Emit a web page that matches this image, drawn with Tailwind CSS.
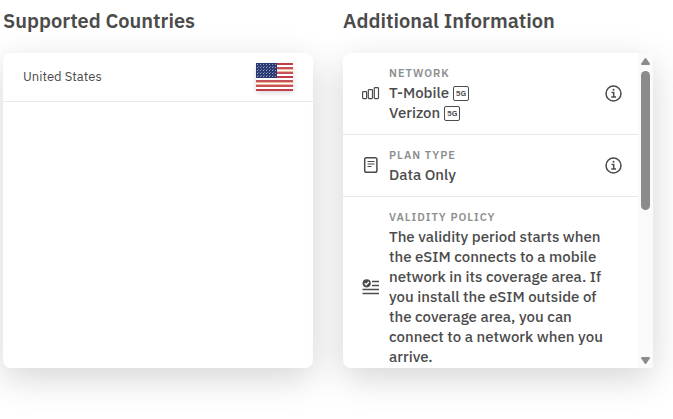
<!DOCTYPE html>
<html lang="en">
<head>
  <meta charset="UTF-8" />
  <meta name="viewport" content="width=device-width, initial-scale=1" />
  <title>eSIM plan details</title>
  <script src="https://cdn.jsdelivr.net/npm/@tailwindcss/browser@4"></script>
</head>
<body class="bg-white pl-[3px] pr-5 pt-2 pb-12 font-['IBM_Plex_Sans',Roboto,sans-serif] text-[#4b4b4b] overflow-x-hidden">

  <main class="grid grid-cols-2 gap-[30px]">

    <!-- Supported countries -->
    <section class="flex flex-col gap-5">
      <h2 class="text-xl leading-[25px] font-semibold whitespace-nowrap">Supported Countries</h2>
      <ul class="h-[315px] rounded-lg bg-white shadow-[0_10px_35px_rgba(0,0,0,0.17)]">
        <li class="flex h-[49px] items-center justify-between border-b border-[#e9e9e9] px-5">
          <span class="text-[13px] leading-5">United States</span>
          <svg class="h-7 w-[37px] shadow-[0_2px_5px_rgba(0,0,0,0.15)]" viewBox="0 0 37 28" role="img" aria-label="United States flag">
            <rect width="37" height="28" fill="#fff" />
            <path fill="#bf3f48" d="M0 0h37v2H0zM0 13h37v2H0zM0 26h37v2H0z" />
            <path fill="#c9525a" d="M0 4h37v2H0zM0 9h37v2H0zM0 17h37v2H0zM0 22h37v2H0z" />
            <path fill="#e9b9a0" d="M0 6h37v1H0zM0 8h37v1H0zM0 19h37v1H0zM0 21h37v1H0z" />
            <rect width="21" height="15" fill="#2b3a72" />
            <g stroke="#9aa2c0" stroke-width="1" stroke-dasharray="1 2">
              <path d="M1 1.500h19M1 4.500h19M1 7.500h19M1 10.500h19M1 13.500h19" />
              <path stroke="#66729e" d="M2 3.500h18M2 6.500h18M2 9.500h18M2 12.500h18" />
            </g>
          </svg>
        </li>
      </ul>
    </section>

    <!-- Additional information -->
    <section class="flex flex-col gap-5">
      <h2 class="text-xl leading-[25px] font-semibold whitespace-nowrap">Additional Information</h2>
      <div class="flex h-[315px] overflow-hidden rounded-l-lg bg-white shadow-[0_10px_35px_rgba(0,0,0,0.17)]">

        <div class="min-w-0 flex-1 overflow-y-auto [scrollbar-width:none]">
          <div class="flex items-center border-b border-[#e9e9e9] pl-[19px] pr-4 pt-2.5 pb-[11px]">
            <svg class="size-[18px] shrink-0" viewBox="0 0 18 18" fill="none" stroke="#4b4b4b" stroke-width="1.200">
              <rect x="0.600" y="7.600" width="4" height="7" rx="0.800" />
              <rect x="6.300" y="5.600" width="4.200" height="9" rx="0.800" />
              <rect x="12.300" y="3.600" width="4.200" height="11" rx="0.800" />
            </svg>
            <div class="ml-[9px] flex-1 text-[15px] leading-5 font-medium">
              <p class="text-[11px] leading-5 font-semibold tracking-[1px] text-[#8c8f8f]">NETWORK</p>
              <p class="flex items-center gap-1">T-Mobile
                <span class="flex h-[15px] w-4 items-center justify-center rounded-xs border border-[#4b4b4b] text-[8px] leading-none font-semibold">5G</span>
              </p>
              <p class="flex items-center gap-1">Verizon
                <span class="flex h-[15px] w-4 items-center justify-center rounded-xs border border-[#4b4b4b] text-[8px] leading-none font-semibold">5G</span>
              </p>
            </div>
            <button type="button" aria-label="Network details" class="shrink-0">
              <svg class="size-[18px]" viewBox="0 0 18 18" fill="none" stroke="#4b4b4b" stroke-width="1.500">
                <circle cx="9.500" cy="9.500" r="7.500" />
                <path d="M7.500 8.500h2.200v4.600M7.200 13.100h4.800" />
                <circle cx="9.500" cy="5.800" r="1" fill="#4b4b4b" stroke="none" />
              </svg>
            </button>
          </div>

          <div class="flex items-center border-b border-[#e9e9e9] pl-[19px] pr-4 pt-2.5 pb-[11px]">
            <svg class="size-[18px] shrink-0" viewBox="0 0 18 18" fill="none" stroke="#4b4b4b" stroke-width="1.500">
              <rect x="2.700" y="1.700" width="12.200" height="14.600" rx="1.800" />
              <path stroke-width="1.100" d="M5.500 5.500h7M5.500 8h7M5.500 10.500h4" />
            </svg>
            <div class="ml-[9px] flex-1 text-[15px] leading-5 font-medium">
              <p class="text-[11px] leading-5 font-semibold tracking-[1px] text-[#8c8f8f]">PLAN TYPE</p>
              <p>Data Only</p>
            </div>
            <button type="button" aria-label="Plan type details" class="shrink-0">
              <svg class="size-[18px]" viewBox="0 0 18 18" fill="none" stroke="#4b4b4b" stroke-width="1.500">
                <circle cx="9.500" cy="9.500" r="7.500" />
                <path d="M7.500 8.500h2.200v4.600M7.200 13.100h4.800" />
                <circle cx="9.500" cy="5.800" r="1" fill="#4b4b4b" stroke="none" />
              </svg>
            </button>
          </div>

          <div class="flex items-center pl-[19px] pr-4 pt-2.5 pb-[11px]">
            <svg class="size-[18px] shrink-0" viewBox="0 0 18 18" fill="none" stroke="#4b4b4b" stroke-width="1.300">
              <circle cx="4.700" cy="5.300" r="4.100" fill="#4b4b4b" stroke="none" />
              <path stroke="#fff" stroke-width="1.300" d="M2.700 5.300l1.500 1.500 2.700-2.900" />
              <path d="M10 3.500H17M10 7.500H17M0.500 11.500H17M0.500 15.500H17" />
            </svg>
            <div class="ml-[9px] flex-1 text-[15px] leading-5 font-medium">
              <p class="text-[11px] leading-5 font-semibold tracking-[1px] text-[#8c8f8f]">VALIDITY POLICY</p>
              <p class="max-w-[220px]">The validity period starts when the eSIM connects to a mobile network in its coverage area. If you install the eSIM outside of the coverage area, you can connect to a network when you arrive.</p>
            </div>
          </div>
        </div>

        <!-- scrollbar -->
        <div class="flex w-[15px] shrink-0 flex-col items-center bg-[#fafafa] pt-1 pb-[3px]" aria-hidden="true">
          <svg class="h-[9px] w-[11px]" viewBox="0 0 11 9" fill="#8b8b8b"><path d="M4.700 1.400q.8-1 1.600 0l3.500 5q.6 1.600-.8 1.600H2q-1.400 0-.8-1.600z" /></svg>
          <div class="mt-[5px] h-[139px] w-[9px] rounded-full bg-[#8b8b8b]"></div>
          <svg class="mt-auto h-[9px] w-[11px]" viewBox="0 0 11 9" fill="#8b8b8b"><path d="M4.700 7.600q.8 1 1.600 0l3.500-5q.6-1.600-.8-1.600H2q-1.400 0-.8 1.600z" /></svg>
        </div>
      </div>
    </section>

  </main>

</body>
</html>
